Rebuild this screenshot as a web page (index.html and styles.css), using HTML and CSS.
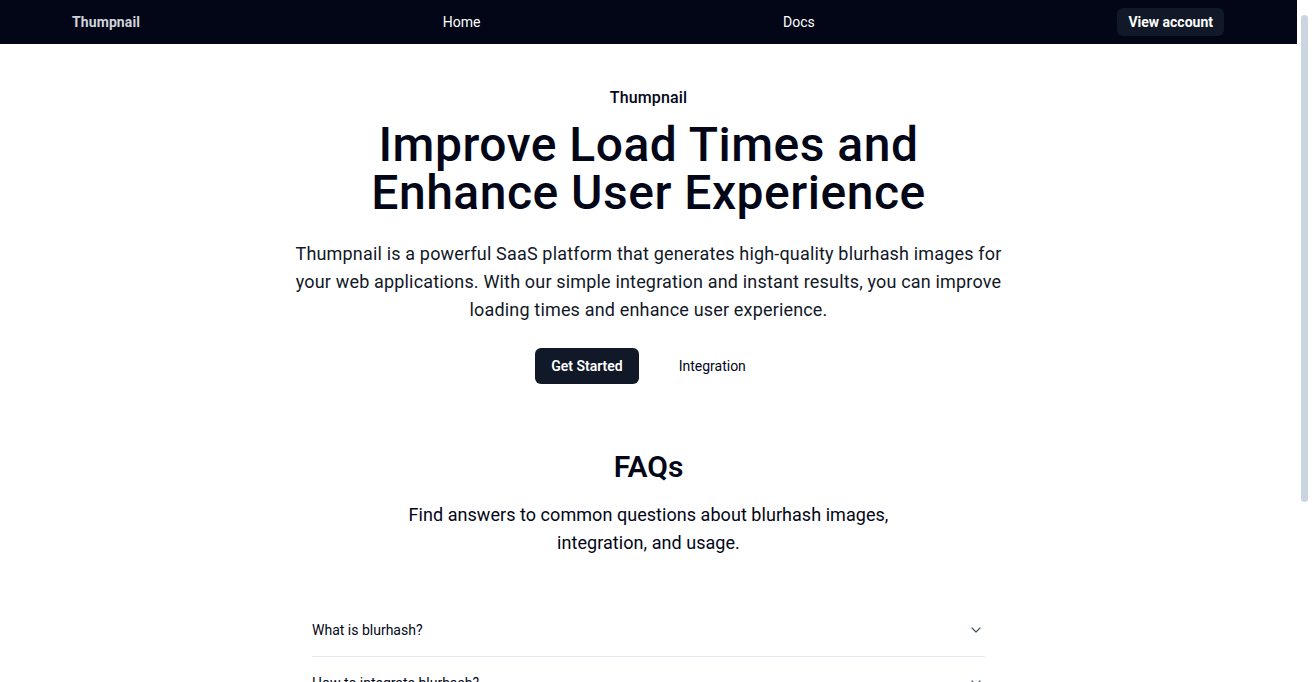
FILE: index.html
```html
<!DOCTYPE html>
<html lang="en">
<head>
<meta charset="utf-8">
<title>Thumpnail</title>
<link rel="stylesheet" href="styles.css">
</head>
<body>
<div class="app">
<div class="page">
<header class="nav">
  <a class="brand" href="#">Thumpnail</a>
  <a class="nav-link" href="#">Home</a>
  <a class="nav-link" href="#">Docs</a>
  <a class="nav-btn" href="#">View account</a>
</header>
<main>
  <section class="hero">
    <p class="eyebrow">Thumpnail</p>
    <h1 class="title">Improve Load Times and<br>Enhance User Experience</h1>
    <p class="lead">Thumpnail is a powerful SaaS platform that generates high-quality blurhash images for your web applications. With our simple integration and instant results, you can improve loading times and enhance user experience.</p>
    <div class="actions">
      <a class="btn-primary" href="#">Get Started</a>
      <a class="btn-ghost" href="#">Integration</a>
    </div>
  </section>
  <section class="faq">
    <h2 class="faq-title">FAQs</h2>
    <p class="faq-sub">Find answers to common questions about blurhash images, integration, and usage.</p>
    <div class="faq-list">
      <div class="faq-item"><span>What is blurhash?</span><svg class="chev" viewBox="0 0 16 16" width="16" height="16"><path d="M4 6l4 4 4-4" fill="none" stroke="currentColor" stroke-width="1.2" stroke-linecap="round" stroke-linejoin="round"/></svg></div>
      <div class="faq-item"><span>How to integrate blurhash?</span><svg class="chev" viewBox="0 0 16 16" width="16" height="16"><path d="M4 6l4 4 4-4" fill="none" stroke="currentColor" stroke-width="1.2" stroke-linecap="round" stroke-linejoin="round"/></svg></div>
      <div class="faq-item"><span>How long does it take to generate an image?</span><svg class="chev" viewBox="0 0 16 16" width="16" height="16"><path d="M4 6l4 4 4-4" fill="none" stroke="currentColor" stroke-width="1.2" stroke-linecap="round" stroke-linejoin="round"/></svg></div>
      <div class="faq-item"><span>Is there a free plan?</span><svg class="chev" viewBox="0 0 16 16" width="16" height="16"><path d="M4 6l4 4 4-4" fill="none" stroke="currentColor" stroke-width="1.2" stroke-linecap="round" stroke-linejoin="round"/></svg></div>
    </div>
  </section>
  <footer class="foot">© 2024 Thumpnail. All rights reserved.</footer>
</main>
</div>
<div class="scrollbar" aria-hidden="true"><div class="thumb"></div></div>
</div>
</body>
</html>
```
FILE: styles.css
```css
* { box-sizing: border-box; }
html, body { height: 100%; }
body {
  margin: 0;
  font-family: Roboto, "Noto Sans", sans-serif;
  color: #020617;
  background: #fff;
  overflow: hidden;
}
.app {
  display: flex;
  height: 100vh;
}
.page {
  flex: 1;
  min-width: 0;
  overflow: hidden;
}
.scrollbar {
  width: 15px;
  flex: none;
  padding: 15px 4px 0;
  background: #fff;
}
.thumb {
  height: 487px;
  background: #cbd5e1;
  border-radius: 4px;
}
a { text-decoration: none; color: inherit; }
.nav {
  height: 44px;
  background: #020617;
  display: flex;
  align-items: center;
  justify-content: space-between;
  padding: 0 73px 0 72px;
}
.brand { color: #d1d5db; font-weight: 700; font-size: 14px; letter-spacing: 0.1px; }
.nav-link { color: #fff; font-size: 14px; font-weight: 400; }
.nav-btn {
  color: #fff; font-weight: 700; font-size: 14px;
  background: #111827; border-radius: 6px;
  height: 28px; padding: 0 11px;
  display: flex; align-items: center;
}
.hero {
  display: flex; flex-direction: column; align-items: center;
  text-align: center; padding-top: 43px;
}
.eyebrow { margin: 0; font-size: 16px; font-weight: 500; line-height: 22px; letter-spacing: 0.15px; }
.title { margin: 12px 0 0; font-size: 48px; line-height: 48px; font-weight: 500; letter-spacing: 0.5px; }
.lead { margin: 23px 0 0; max-width: 730px; font-size: 18px; line-height: 28px; color: #111827; letter-spacing: 0.17px; }
.actions { margin-top: 24px; display: flex; align-items: center; gap: 24px; }
.btn-primary {
  background: #111827; color: #fff; font-size: 14px; font-weight: 600;
  height: 36px; padding: 0 16px; border-radius: 6px;
  display: flex; align-items: center;
}
.btn-ghost { font-size: 14px; padding: 0 16px; height: 36px; display: flex; align-items: center; }
.faq { display: flex; flex-direction: column; align-items: center; text-align: center; padding-top: 65px; }
.faq-title { margin: 0; font-size: 30px; line-height: 36px; font-weight: 600; }
.faq-sub { margin: 16px 0 0; max-width: 512px; font-size: 18px; line-height: 28px; letter-spacing: 0.05px; }
.faq-list { width: 673px; margin-top: 47px; text-align: left; }
.faq-item {
  display: flex; justify-content: space-between; align-items: center;
  height: 53px; border-bottom: 1px solid #e2e8f0;
  font-size: 14px; font-weight: 400; color: #020617;
}
.chev { color: #475569; margin-right: 1px; }
.foot { text-align: center; padding: 48px 0 42px; font-size: 13px; color: #64748b; }
```
